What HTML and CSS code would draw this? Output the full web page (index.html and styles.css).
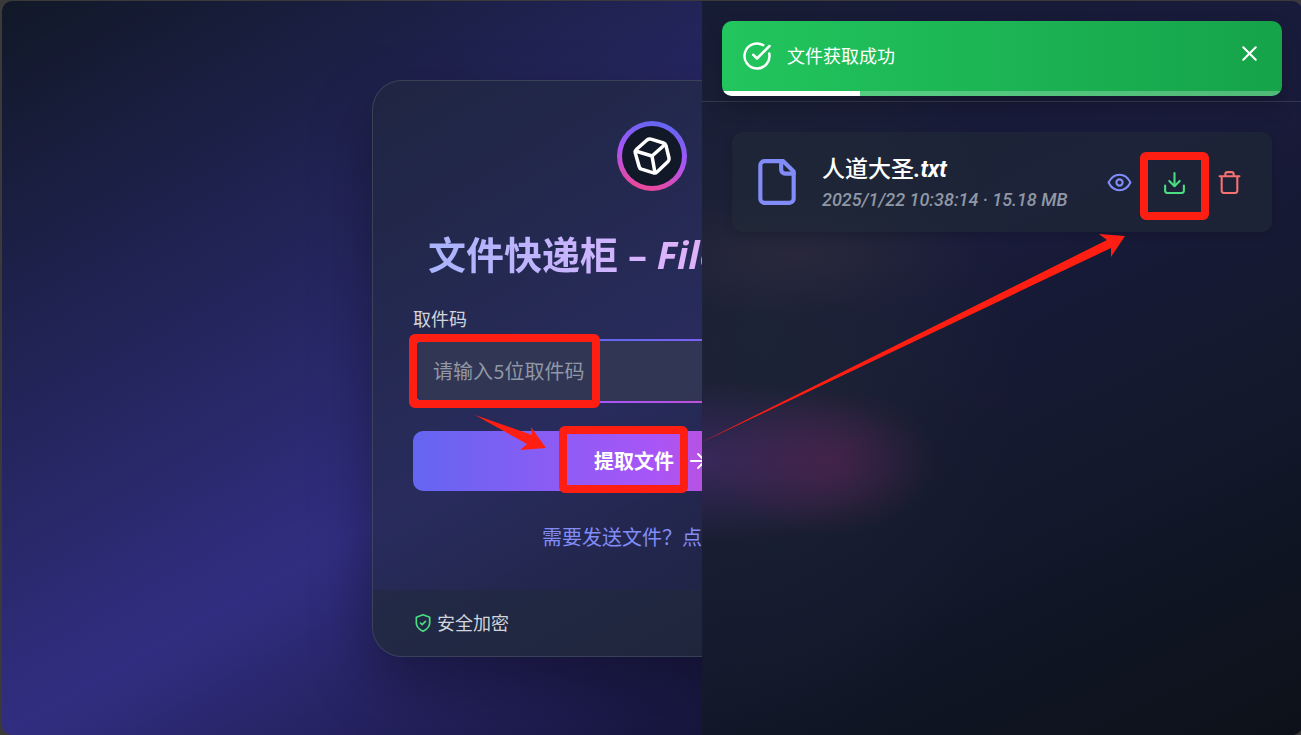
FILE: index.html
```html
<!DOCTYPE html>
<html lang="zh-CN">

<head>
  <meta charset="UTF-8">
  <meta name="viewport" content="width=device-width, initial-scale=1.0">
  <title>文件快递柜 - FileCodeBox</title>
  <link rel="stylesheet" href="styles.css">
</head>

<body>
  <div class="app">
    <main class="card">
      <form class="card-body">
        <div class="logo">
          <svg viewBox="0 0 40 40" class="logo-icon">
            <path d="M15 4Q17 2.500 19 3.200L31.500 7Q33.500 7.600 34 9.600L37 22Q37.500 24 36 25.500L25 36Q23.500 37.500 21.500 36.900L9.500 33.200Q7.700 32.600 7.200 30.700L3.300 17Q2.800 15 4.300 13.500Z"></path>
            <path d="M3.500 15L20 20L33 8.500M20 20L23 37"></path>
          </svg>
        </div>
        <h1 class="title">文件快递柜 – <em>FileCodeBox</em></h1>
        <label class="field-label" for="code">取件码</label>
        <input type="text" id="code" class="field" placeholder="请输入5位取件码">
        <button type="submit" class="submit">
          <span>提取文件</span>
          <svg viewBox="0 0 24 24" class="icon submit-arrow">
            <path d="M5 12h14M12 5l7 7-7 7"></path>
          </svg>
        </button>
        <a href="#" class="send-link">需要发送文件？点击这里</a>
      </form>
      <footer class="card-footer">
        <svg viewBox="0 0 24 24" class="icon shield">
          <path d="M12 22s8-4 8-10V5l-8-3-8 3v7c0 6 8 10 8 10z"></path>
          <path d="M9 12l2 2 4-4"></path>
        </svg>
        <span>安全加密</span>
      </footer>
    </main>

    <aside class="drawer">
      <header class="drawer-header"></header>
      <ul class="records">
        <li class="record">
          <svg viewBox="0 0 24 24" class="icon record-file">
            <path d="M15 2H6a2 2 0 0 0-2 2v16a2 2 0 0 0 2 2h12a2 2 0 0 0 2-2V7Z"></path>
            <path d="M14 2v4a2 2 0 0 0 2 2h4"></path>
          </svg>
          <div class="record-info">
            <p class="record-name">人道大圣<em>.txt</em></p>
            <p class="record-meta">2025/1/22 10:38:14 · 15.18 MB</p>
          </div>
          <div class="record-actions">
            <button type="button" class="action view" aria-label="查看">
              <svg viewBox="0 0 24 24" class="icon">
                <path d="M1.500 12C4 7 8 4.500 12 4.500s8 2.500 10.500 7.500C20 17 16 19.500 12 19.500S4 17 1.500 12Z"></path>
                <circle cx="12" cy="12" r="3"></circle>
              </svg>
            </button>
            <button type="button" class="action download" aria-label="下载">
              <svg viewBox="0 0 24 24" class="icon">
                <path d="M21 15v5a2 2 0 0 1-2 2H5a2 2 0 0 1-2-2v-5"></path>
                <path d="M7 10.500l5 5 5-5M12 15.500V3"></path>
              </svg>
            </button>
            <button type="button" class="action remove" aria-label="删除">
              <svg viewBox="0 0 24 24" class="icon">
                <path d="M2.500 6h19M19.500 6v14c0 1-1 2-2 2h-11c-1 0-2-1-2-2V6M8 6V4c0-1 1-2 2-2h4c1 0 2 1 2 2v2"></path>
              </svg>
            </button>
          </div>
        </li>
      </ul>
    </aside>

    <div class="toast" role="status">
      <svg viewBox="0 0 24 24" class="icon toast-icon">
        <path d="M21.801 10A10 10 0 1 1 17 3.335"></path>
        <path d="M9 11l3 3L22 4"></path>
      </svg>
      <p class="toast-text">文件获取成功</p>
      <button type="button" class="toast-close" aria-label="关闭">
        <svg viewBox="0 0 24 24" class="icon">
          <path d="M18 6L6 18M6 6l12 12"></path>
        </svg>
      </button>
      <div class="toast-track">
        <div class="toast-bar" style="width: 24.6%"></div>
      </div>
    </div>
  </div>

  <!-- guide marks: code box -> submit -> download -->
  <svg class="guide" width="1301" height="735" viewBox="0 0 1301 735">
    <rect x="413" y="338" width="183" height="66" rx="2"></rect>
    <rect x="563" y="430" width="121" height="59" rx="2"></rect>
    <rect x="1144" y="156" width="61" height="60" rx="2"></rect>
    <path d="M475 415L532 435L531 427L546 448L520 450L527 444Z"></path>
    <path d="M698 444L1107 240L1099 234L1125 236L1111 257L1111 248Z"></path>
  </svg>
</body>

</html>
```
FILE: styles.css
```css
* {
  box-sizing: border-box;
}

html,
body {
  height: 100%;
}

body {
  margin: 0;
  padding: 1px 0 0 2px;
  overflow: hidden;
  background-color: #3a3a3a;
  color: #d1d5db;
  font-family: Lato, "Noto Sans CJK SC", sans-serif;
  font-size: 18px;
  line-height: 24px;
}

p {
  margin: 0;
}

.app {
  position: relative;
  height: 100%;
  margin-right: -1px;
  display: flex;
  align-items: center;
  justify-content: center;
  overflow: hidden;
  border-radius: 10px;
  background: linear-gradient(to bottom right, #111827, #312e81, #000);
}

.icon {
  fill: none;
  stroke: currentColor;
  stroke-width: 2;
  stroke-linecap: round;
  stroke-linejoin: round;
  flex-shrink: 0;
}

/* pick-up card */
.card {
  width: 560px;
  max-width: 100%;
  overflow: hidden;
  border: 1px solid rgba(75, 85, 99, 0.6);
  border-radius: 30px;
  background-color: rgba(31, 41, 55, 0.5);
  box-shadow: 0 25px 60px rgba(0, 0, 0, 0.35);
}

.card-body {
  display: flex;
  flex-direction: column;
  padding: 40px 40px 39px;
}

.logo {
  align-self: center;
  width: 70px;
  height: 70px;
  padding: 10px;
  border: 5px solid transparent;
  border-radius: 50%;
  background: linear-gradient(#111827, #111827) padding-box,
    linear-gradient(195deg, #6366f1 10%, #a855f7 50%, #ec4899 90%) border-box;
}

.logo-icon {
  display: block;
  width: 40px;
  height: 40px;
  fill: none;
  stroke: #fff;
  stroke-width: 3.5;
  stroke-linejoin: round;
}

.title {
  margin: 36px 0 26px;
  text-align: center;
  white-space: nowrap;
  font-family: "Open Sans", "Noto Sans CJK SC", sans-serif;
  font-size: 38px;
  line-height: 54px;
  font-weight: 700;
  color: transparent;
  background: linear-gradient(to right, #a5b4fc, #d8b4fe, #f9a8d4);
  -webkit-background-clip: text;
  background-clip: text;
}

.field-label {
  margin-bottom: 8px;
}

.field {
  width: 100%;
  height: 64px;
  padding: 0 18px;
  border: 2px solid transparent;
  border-radius: 10px;
  outline: none;
  color: #fff;
  font: inherit;
  font-size: 20px;
  background: linear-gradient(#303654, #303654) padding-box,
    linear-gradient(165deg, #6366f1 30%, #a855f7 60%, #ec4899) border-box;
}

.field::placeholder {
  color: #9097a5;
}

.submit {
  display: flex;
  align-items: center;
  justify-content: center;
  gap: 12px;
  height: 60px;
  margin: 28px 0 32px;
  border: none;
  border-radius: 10px;
  color: #fff;
  font: inherit;
  font-size: 20px;
  font-weight: 700;
  background: linear-gradient(to right, #6366f1, #a855f7, #ec4899);
  cursor: pointer;
}

.submit-arrow {
  width: 24px;
  height: 24px;
}

.send-link {
  align-self: center;
  color: #818cf8;
  font-size: 20px;
  line-height: 28px;
  text-decoration: none;
}

.card-footer {
  display: flex;
  align-items: center;
  gap: 4px;
  height: 66px;
  padding: 0 40px;
  background-color: rgba(31, 41, 55, 0.5);
}

.shield {
  width: 20px;
  height: 20px;
  color: #4ade80;
}

.drawer {
  position: absolute;
  top: 0;
  right: 0;
  bottom: 0;
  width: 600px;
  max-width: 100%;
  background:
    radial-gradient(ellipse 110px 75px at 125px 460px, rgba(96, 36, 80, 0.5), transparent),
    radial-gradient(ellipse 220px 80px at 0 460px, rgba(88, 48, 128, 0.5), transparent),
    radial-gradient(ellipse 190px 60px at 90px 255px, rgba(60, 48, 66, 0.4), transparent),
    radial-gradient(ellipse 260px 400px at 60px 340px, rgba(31, 39, 52, 0.7), transparent),
    linear-gradient(155deg, #161b35, #191b3b 35%, #13182c 65%, #0c1119);
}

.drawer-header {
  height: 101px;
  border-bottom: 1px solid #343a4d;
}

.records {
  margin: 0;
  padding: 30px;
  list-style: none;
}

.record {
  display: flex;
  align-items: center;
  gap: 20px;
  padding: 20px;
  height: 100px;
  border-radius: 10px;
  background-color: rgba(31, 41, 55, 0.6);
  box-shadow: 0 3px 8px rgba(0, 0, 0, 0.15);
}

.record-file {
  width: 50px;
  height: 50px;
  color: #818cf8;
}

.record-info {
  flex: 1;
  padding-top: 2px;
  white-space: nowrap;
  font-family: Roboto, "Noto Sans CJK SC", sans-serif;
}

.record-name {
  color: #fff;
  font-size: 23px;
  line-height: 34px;
  font-weight: 500;
}

.record-name em {
  font-weight: 700;
}

.record-meta {
  color: #9097a5;
  font-style: italic;
  font-weight: 500;
  line-height: 26px;
}

.record-actions {
  display: flex;
  gap: 10px;
}

.action {
  display: flex;
  padding: 10px;
  border: none;
  background: none;
  cursor: pointer;
}

.action .icon {
  width: 25px;
  height: 25px;
}

.view {
  color: #818cf8;
}

.download {
  color: #4ade80;
}

.remove {
  color: #f87171;
}

/* toast */
.toast {
  position: absolute;
  top: 20px;
  right: 20px;
  width: 560px;
  height: 75px;
  padding: 0 20px 5px;
  display: flex;
  align-items: center;
  gap: 15px;
  overflow: hidden;
  border-radius: 10px;
  color: #fff;
  background: linear-gradient(to right, #22c55e, #16a34a);
  box-shadow: 0 10px 20px rgba(0, 0, 0, 0.2);
}

.toast-icon {
  width: 30px;
  height: 30px;
}

.toast-text {
  flex: 1;
}

.toast-close {
  display: flex;
  padding: 0 0 5px;
  border: none;
  color: inherit;
  background: none;
  cursor: pointer;
}

.toast-close .icon {
  width: 25px;
  height: 25px;
}

.toast-track {
  position: absolute;
  left: 0;
  right: 0;
  bottom: 0;
  height: 5px;
  background-color: rgba(255, 255, 255, 0.25);
}

.toast-bar {
  height: 100%;
  background-color: #fff;
}

/* guide marks */
.guide {
  position: absolute;
  top: 0;
  left: 0;
  pointer-events: none;
}

.guide rect {
  fill: none;
  stroke: #ff1f12;
  stroke-width: 8;
  stroke-linejoin: round;
}

.guide path {
  fill: #ff1f12;
}
```
